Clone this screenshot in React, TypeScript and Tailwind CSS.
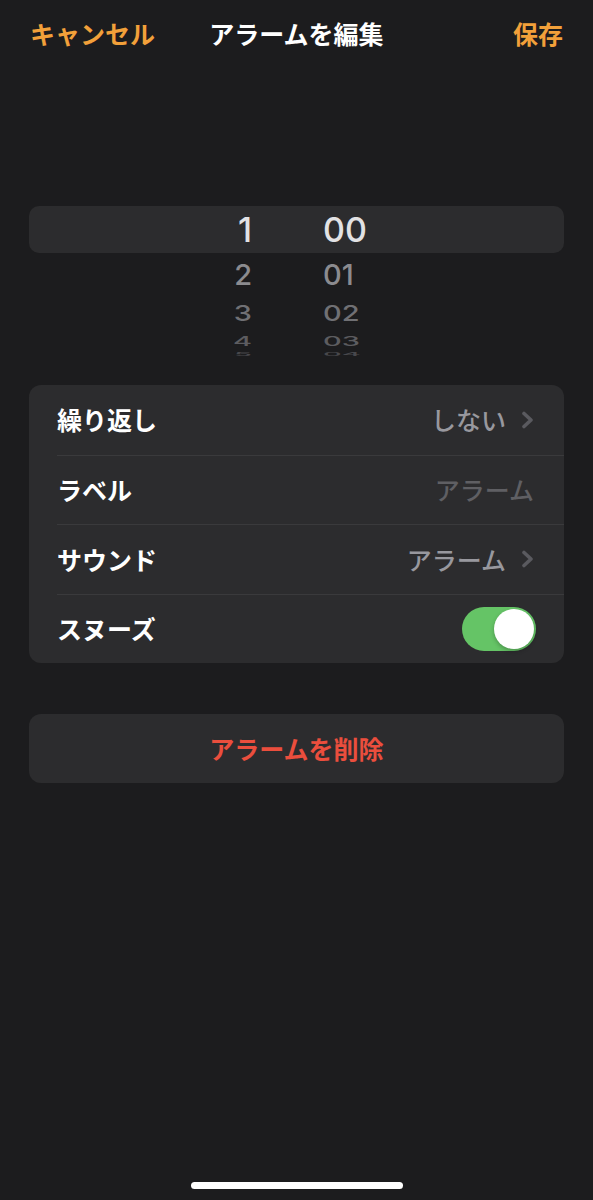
import React from "react";

const JP = { fontFamily: '"Noto Sans CJK JP", "Noto Sans", sans-serif' };
const NUM = { fontFamily: 'Inter, "Noto Sans", sans-serif' };

function Chevron() {
  return (
    <svg width="13" height="18" viewBox="0 0 13 18" className="shrink-0">
      <path d="M3 2.5 L10 9 L3 15.5" fill="none" stroke="#5a5a5f" strokeWidth="3.6" strokeLinecap="round" strokeLinejoin="round" />
    </svg>
  );
}

function PickerRow({ h, hour, minute, size, color, scaleY, bg }: { h: string; hour: string; minute: string; size: string; color: string; scaleY?: string; bg?: boolean }) {
  return (
    <div className={`flex items-center ${h} ${bg ? "bg-[#2c2c2e] rounded-[10px]" : ""}`}>
      <div className={`flex items-center ml-[163px] ${scaleY ?? ""}`}>
        <div className={`w-[60px] text-right leading-none font-medium ${size} ${color}`} style={NUM}>{hour}</div>
        <div className={`w-[60px] ml-[71px] text-left leading-none font-medium ${size} ${color}`} style={NUM}>{minute}</div>
      </div>
    </div>
  );
}

function Row({ label, children, border }: { label: string; children?: React.ReactNode; border?: boolean }) {
  return (
    <div className="pl-[28px]">
      <div className={`h-[69.5px] flex items-center justify-between pr-[30px] ${border ? "border-t border-[#3a3a3c]" : ""}`}>
        <span className="text-[25px] font-semibold text-white leading-none" style={JP}>{label}</span>
        {children}
      </div>
    </div>
  );
}

export default function App() {
  return (
    <div className="min-h-[1200px] w-full bg-[#1c1c1e] flex flex-col" style={JP}>
      <div className="h-[68px] flex items-center justify-between px-[30px]">
        <span className="text-[25px] font-semibold text-[#f2a03a] w-[126px]">キャンセル</span>
        <span className="text-[25px] font-bold text-white">アラームを編集</span>
        <span className="text-[25px] font-semibold text-[#f2a03a] w-[126px] text-right">保存</span>
      </div>

      <div className="mt-[138px] mx-[29px] flex flex-col">
        <PickerRow h="h-[47px]" hour="1" minute="00" size="text-[34px]" color="text-[#e2e2e4]" bg />
        <PickerRow h="h-[43px]" hour="2" minute="01" size="text-[29px]" color="text-[#8b8b8f]" />
        <PickerRow h="h-[34px]" hour="3" minute="02" size="text-[29px]" color="text-[#707074]" scaleY="scale-y-[0.75]" />
        <PickerRow h="h-[22px]" hour="4" minute="03" size="text-[29px]" color="text-[#5c5c60]" scaleY="scale-y-[0.45]" />
        <PickerRow h="h-[4px]" hour="5" minute="04" size="text-[29px]" color="text-[#48484c]" scaleY="scale-y-[0.18]" />
      </div>

      <div className="mt-[29px] mx-[29px] bg-[#2c2c2e] rounded-[12px] flex flex-col">
        <Row label="繰り返し">
          <div className="flex items-center gap-[15px]">
            <span className="text-[25px] font-medium text-[#98989e] leading-none">しない</span>
            <Chevron />
          </div>
        </Row>
        <Row label="ラベル" border>
          <span className="text-[25px] font-medium text-[#5f5f63] leading-none">アラーム</span>
        </Row>
        <Row label="サウンド" border>
          <div className="flex items-center gap-[15px]">
            <span className="text-[25px] font-medium text-[#98989e] leading-none">アラーム</span>
            <Chevron />
          </div>
        </Row>
        <Row label="スヌーズ" border>
          <div className="w-[74px] h-[44px] rounded-full bg-[#65c466] flex items-center justify-end pr-[2px] -mr-[2px]">
            <div className="w-[40px] h-[40px] rounded-full bg-white shadow-[0_2px_4px_rgba(0,0,0,0.25)]" />
          </div>
        </Row>
      </div>

      <div className="mt-[51px] mx-[29px] h-[69px] bg-[#2c2c2e] rounded-[12px] flex items-center justify-center">
        <span className="text-[25px] font-semibold text-[#eb4e3d]">アラームを削除</span>
      </div>

      <div className="mt-auto mb-[11px] flex justify-center">
        <div className="w-[212px] h-[7px] rounded-full bg-white" />
      </div>
    </div>
  );
}
